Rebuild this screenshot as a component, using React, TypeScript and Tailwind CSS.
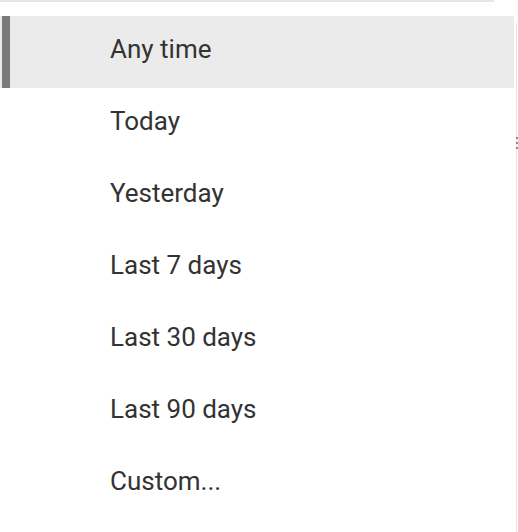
const options = [
  "Any time",
  "Today",
  "Yesterday",
  "Last 7 days",
  "Last 30 days",
  "Last 90 days",
  "Custom...",
];

export default function App() {
  const selected = 0;

  return (
    <div className="relative h-[532px] w-[518px] overflow-hidden bg-white font-['Roboto',sans-serif]">
      {/* top edge */}
      <div className="h-[2px] w-[494px] bg-[#e6e6e6]" />
      <div className="flex">
        <ul className="mt-[14px] w-[514px]">
          {options.map((label, i) => (
            <li
              key={label}
              className={`flex h-[72px] items-center ${i === selected ? "bg-[#ebebeb]" : ""}`}
            >
              <div className={`ml-[2px] h-full w-[8px] shrink-0 ${i === selected ? "bg-[#7a7a7a]" : ""}`} />
              <span className="mb-[7px] pl-[100px] text-[26px] leading-[30px] text-[#333333]">{label}</span>
            </li>
          ))}
        </ul>
        <div className="ml-[2px] mt-[21px] h-[520px] w-[1px] bg-[#e4e4e4]" />
      </div>
      {/* scrollbar grip marks */}
      <div className="absolute left-[516px] top-[137px] flex flex-col gap-[3px]">
        <div className="h-[2px] w-[2px] bg-[#8a8a8a]" />
        <div className="h-[2px] w-[2px] bg-[#8a8a8a]" />
        <div className="h-[2px] w-[2px] bg-[#8a8a8a]" />
      </div>
    </div>
  );
}
